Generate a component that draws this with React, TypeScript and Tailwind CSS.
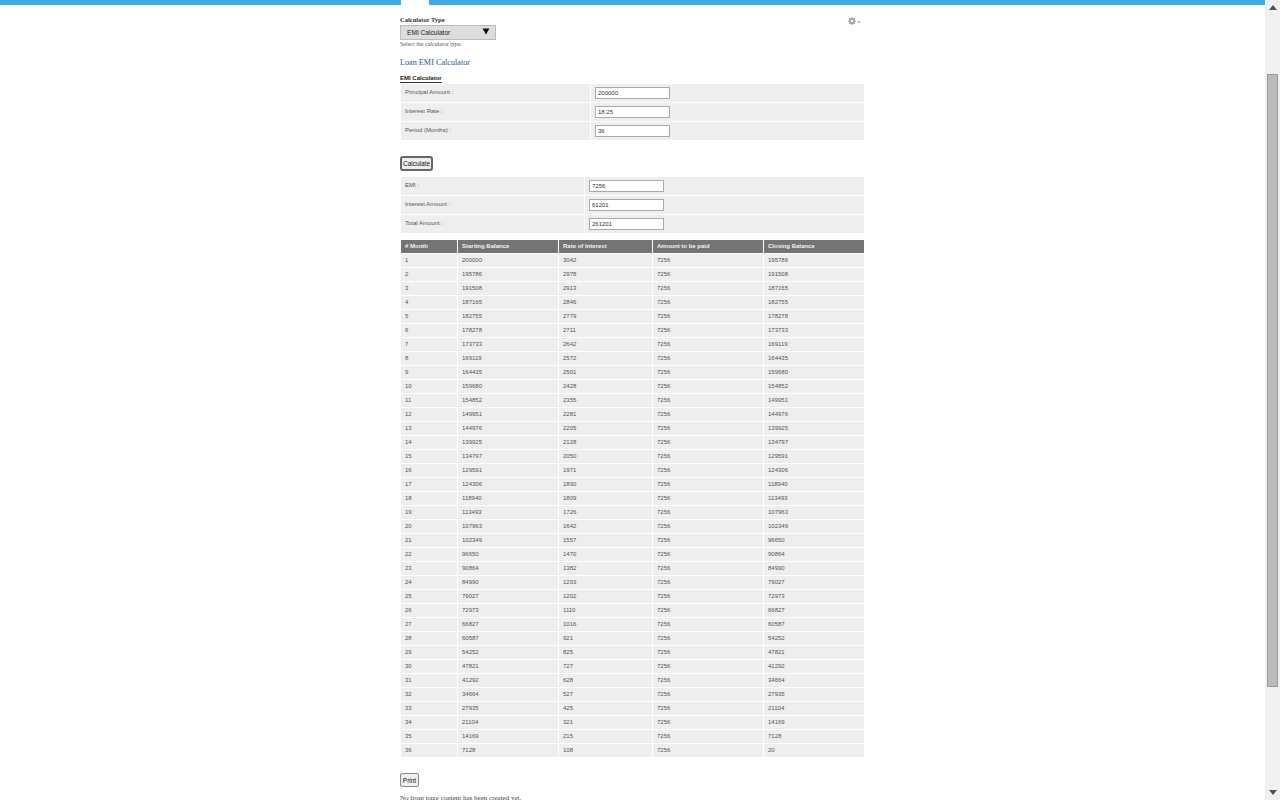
const rows: number[][] = [
[1,200000,3042,195786],[2,195786,2978,191508],[3,191508,2913,187165],[4,187165,2846,182755],[5,182755,2779,178278],[6,178278,2711,173733],
[7,173733,2642,169119],[8,169119,2572,164435],[9,164435,2501,159680],[10,159680,2428,154852],[11,154852,2355,149951],[12,149951,2281,144976],
[13,144976,2205,139925],[14,139925,2128,134797],[15,134797,2050,129591],[16,129591,1971,124306],[17,124306,1890,118940],[18,118940,1809,113493],
[19,113493,1726,107963],[20,107963,1642,102349],[21,102349,1557,96650],[22,96650,1470,90864],[23,90864,1382,84990],[24,84990,1293,79027],
[25,79027,1202,72973],[26,72973,1110,66827],[27,66827,1016,60587],[28,60587,921,54252],[29,54252,825,47821],[30,47821,727,41292],
[31,41292,628,34664],[32,34664,527,27935],[33,27935,425,21104],[34,21104,321,14169],[35,14169,215,7128],[36,7128,108,20],
];
const grid = "grid grid-cols-[56px_100px_93px_110px_100px] gap-x-px";
function FormRow({ label, value, left }: { label: string; value: string; left: string }) {
  return (
    <div className={"grid gap-x-px h-[18px] " + left}>
      <div className="bg-[#eeeeee] pl-[4px] pt-[5px] leading-[6px] text-[6px] text-[#555555]">{label}</div>
      <div className="bg-[#eeeeee] pl-[4px] pt-[3px]">
        <input readOnly value={value} className="block w-[75px] h-[12px] border border-[#aaaaaa] bg-white px-[2px] text-[6px] text-[#333333] outline-none" />
      </div>
    </div>
  );
}
export default function App() {
  return (
    <div className="flex h-[800px] w-[1280px] overflow-hidden bg-white font-['Liberation_Sans',Arial,sans-serif]">
      <div className="w-[1265px] shrink-0">
        <div className="h-[5px] bg-[#42a7e2] pl-[401px]"><div className="h-[5px] w-[28px] bg-white" /></div>
        <div className="ml-[400px] w-[464px] pt-[11px]">
          <div className="flex justify-between">
            <div>
              <div className="font-['Liberation_Serif',serif] font-bold text-[6.5px] leading-[8px] text-[#333333]">Calculator Type</div>
              <div className="mt-px flex h-[15px] w-[96px] items-center justify-between border border-[#bbbbbb] bg-[#dddddd] pl-[6px] pr-[5px] text-[6.6px] text-[#222222]">
                <span>EMI Calculator</span>
                <svg width="8" height="7" viewBox="0 0 8 7" className="mb-[2px]"><path d="M0.5 0.5H7.5L4 6.5Z" fill="#111111" /></svg>
              </div>
              <div className="mt-px font-['Liberation_Serif',serif] text-[6px] leading-[7px] text-[#555555]">Select the calculator type.</div>
            </div>
            <svg width="13" height="9" viewBox="0 0 13 9" className="mr-[3px] mt-[1px]">
              <circle cx="4" cy="4" r="2.1" fill="none" stroke="#9a9a9a" strokeWidth="1.6" />
              <path d="M4 0V1.5M4 6.5V8M0 4H1.5M6.5 4H8M1.2 1.2L2.2 2.2M5.8 5.8L6.8 6.8M6.8 1.2L5.8 2.2M2.2 5.8L1.2 6.8" stroke="#9a9a9a" strokeWidth="1.1" fill="none" />
              <path d="M9 4.2h4l-2 2.3z" fill="#aaaaaa" />
            </svg>
          </div>
          <div className="mt-[10px] font-['Liberation_Serif',serif] text-[8.2px] leading-[10px] text-[#1f5a8a]">Loan EMI Calculator</div>
          <div className="mt-[6px] flex h-[9px]"><span className="h-[9px] border-b border-[#333333] text-[6px] font-bold leading-[8px] text-[#222222]">EMI Calculator</span></div>
          <div className="ml-px mt-[1px] flex flex-col gap-y-px">
            <FormRow left="grid-cols-[189px_273px]" label="Principal Amount :" value="200000" />
            <FormRow left="grid-cols-[189px_273px]" label="Interest Rate :" value="18.25" />
            <FormRow left="grid-cols-[189px_273px]" label="Period (Months) :" value="36" />
          </div>
          <button className="mt-[16px] block h-[15px] w-[33px] rounded-[3px] border-2 border-[#666666] bg-[#eeeeee] text-center text-[6.5px] leading-[10px] text-[#111111]">Calculate</button>
          <div className="ml-px mt-[6px] flex flex-col gap-y-px">
            <FormRow left="grid-cols-[183px_279px]" label="EMI :" value="7256" />
            <FormRow left="grid-cols-[183px_279px]" label="Interest Amount :" value="61201" />
            <FormRow left="grid-cols-[183px_279px]" label="Total Amount :" value="261201" />
          </div>
          <div className="ml-px mt-[7px] text-[6px] leading-[13px]">
            <div className={grid + " h-[14px] border-b border-white font-bold text-[#f2f2f2]"}>
              {["# Month", "Starting Balance", "Rate of Interest", "Amount to be paid", "Closing Balance"].map((h) => (
                <div key={h} className="bg-[#747474] pl-[4px]">{h}</div>
              ))}
            </div>
            {rows.map((r) => (
              <div key={r[0]} className={grid + " h-[14px] border-b border-white text-[#555555]"}>
                {[r[0], r[1], r[2], 7256, r[3]].map((c, i) => (
                  <div key={i} className="bg-[#eeeeee] pl-[4px]">{c}</div>
                ))}
              </div>
            ))}
          </div>
          <button className="mt-[15px] block h-[14px] w-[19px] rounded-[2px] border border-[#888888] bg-[#eeeeee] text-center text-[6.5px] leading-[11px] text-[#111111]">Print</button>
          <div className="mt-[7px] font-['Liberation_Serif',serif] text-[7px] leading-[8px] text-[#444444]">No front page content has been created yet.</div>
        </div>
      </div>
      <div className="flex h-[800px] w-[15px] shrink-0 flex-col items-center bg-[#f0f0f0]">
        <svg width="8" height="5" viewBox="0 0 8 5" className="mt-[5px] shrink-0"><path d="M4 0L8 5H0Z" fill="#505050" /></svg>
        <div className="mt-[64px] h-[613px] w-[11px] shrink-0 border border-[#999999] bg-[#bababa]" />
        <svg width="8" height="5" viewBox="0 0 8 5" className="mt-[103px] shrink-0"><path d="M0 0H8L4 5Z" fill="#505050" /></svg>
      </div>
    </div>
  );
}
